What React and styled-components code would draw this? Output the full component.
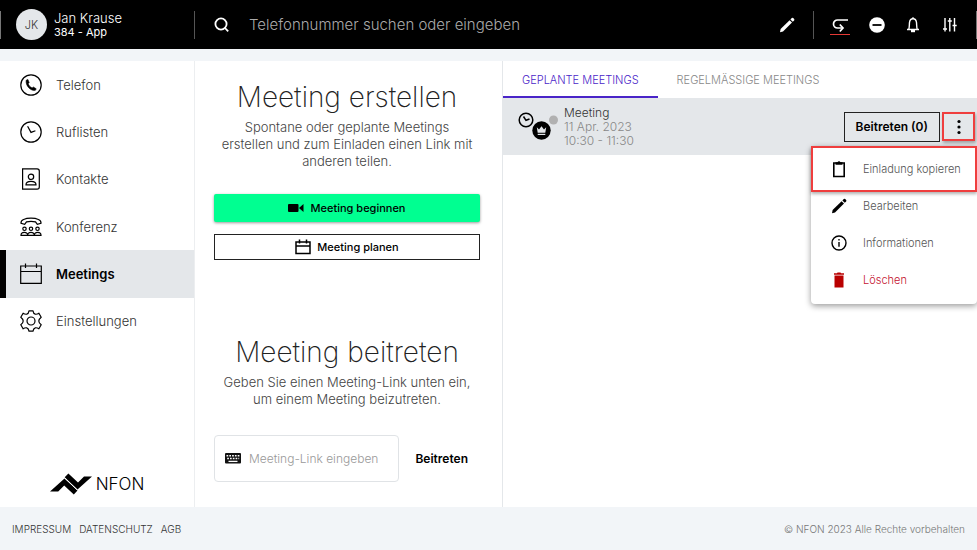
import React, { useState } from 'react'
import styled, { createGlobalStyle } from 'styled-components'

const NAV = [
  { id: 'telefon', label: 'Telefon' },
  { id: 'ruflisten', label: 'Ruflisten' },
  { id: 'kontakte', label: 'Kontakte' },
  { id: 'konferenz', label: 'Konferenz' },
  { id: 'meetings', label: 'Meetings' },
  { id: 'einstellungen', label: 'Einstellungen' },
]

const App = () => {
  const [page, setPage] = useState('meetings')
  const [tab, setTab] = useState('geplant')
  const [link, setLink] = useState('')
  const [menuOpen, setMenuOpen] = useState(true)

  return (
    <Page>
      <GlobalStyle />
      <Header>
        <Profile>
          <Avatar>JK</Avatar>
          <div>
            <UserName>Jan Krause</UserName>
            <UserLine>384 - App</UserLine>
          </div>
        </Profile>
        <SearchBar>
          <SearchIcon />
          <SearchInput
            type="text"
            aria-label="Telefonnummer suchen"
            placeholder="Telefonnummer suchen oder eingeben"
          />
          <HeaderButton aria-label="Bearbeiten"><PencilIcon size={16} /></HeaderButton>
        </SearchBar>
        <HeaderActions>
          <HeaderButton aria-label="Umleitung" $marked><DivertIcon /></HeaderButton>
          <HeaderButton aria-label="Nicht stören"><DndIcon /></HeaderButton>
          <HeaderButton aria-label="Benachrichtigungen"><BellIcon /></HeaderButton>
          <HeaderButton aria-label="Audio"><SlidersIcon /></HeaderButton>
        </HeaderActions>
      </Header>

      <Main>
        <Sidebar>
          <Nav>
            {NAV.map(({ id, label }) => (
              <NavLink
                key={id}
                href={`#${id}`}
                $active={page === id}
                onClick={() => setPage(id)}
              >
                <NavIcon name={id} />
                {label}
              </NavLink>
            ))}
          </Nav>
          <Logo>
            <LogoMark />
            NFON
          </Logo>
        </Sidebar>

        <Actions>
          <Title>Meeting erstellen</Title>
          <Text>Spontane oder geplante Meetings erstellen und zum Einladen einen Link mit anderen teilen.</Text>
          <Buttons>
            <WideButton $primary><CameraIcon />Meeting beginnen</WideButton>
            <WideButton><SmallCalendarIcon />Meeting planen</WideButton>
          </Buttons>
          <Title>Meeting beitreten</Title>
          <Text>Geben Sie einen Meeting-Link unten ein, um einem Meeting beizutreten.</Text>
          <JoinForm onSubmit={e => e.preventDefault()}>
            <LinkField>
              <KeyboardIcon />
              <LinkInput
                type="text"
                aria-label="Meeting-Link"
                placeholder="Meeting-Link eingeben"
                value={link}
                onChange={e => setLink(e.target.value)}
              />
            </LinkField>
            <JoinButton type="submit">Beitreten</JoinButton>
          </JoinForm>
        </Actions>

        <Meetings>
          <Tabs role="tablist">
            <Tab role="tab" aria-selected={tab === 'geplant'} $active={tab === 'geplant'} onClick={() => setTab('geplant')}>
              GEPLANTE MEETINGS
            </Tab>
            <Tab role="tab" aria-selected={tab === 'regel'} $active={tab === 'regel'} onClick={() => setTab('regel')}>
              REGELMÄSSIGE MEETINGS
            </Tab>
          </Tabs>
          <MeetingRow>
            <MeetingIcon />
            <MeetingInfo>
              <MeetingName>Meeting</MeetingName>
              <div>11 Apr. 2023</div>
              <div>10:30 - 11:30</div>
            </MeetingInfo>
            <RowButton>Beitreten (0)</RowButton>
            <MoreButton aria-label="Mehr" onClick={() => setMenuOpen(!menuOpen)}>
              <DotsIcon />
            </MoreButton>
            {menuOpen && (
              <Menu role="menu">
                <MenuItem role="menuitem" $marked><ClipboardIcon />Einladung kopieren</MenuItem>
                <MenuItem role="menuitem"><PencilIcon size={16} />Bearbeiten</MenuItem>
                <MenuItem role="menuitem"><InfoIcon />Informationen</MenuItem>
                <MenuItem role="menuitem" $danger><TrashIcon />Löschen</MenuItem>
              </Menu>
            )}
          </MeetingRow>
        </Meetings>
      </Main>

      <Footer>
        <FooterLinks>
          <a href="#impressum">IMPRESSUM</a>
          <a href="#datenschutz">DATENSCHUTZ</a>
          <a href="#agb">AGB</a>
        </FooterLinks>
        <Copyright>© NFON 2023 Alle Rechte vorbehalten</Copyright>
      </Footer>
    </Page>
  )
}

export default App

/* icons */

const SearchIcon = () => (
  <svg width="16" height="16" viewBox="0 0 16 16" fill="none" stroke="#fff" strokeWidth="1.8">
    <circle cx="7" cy="7" r="5.6" />
    <path d="M10.5 10.5 14.2 14.4" />
  </svg>
)

const PencilIcon = ({ size }) => (
  <svg width={size} height={size} viewBox="0 0 16 16" fill="currentColor">
    <path d="M1 15.2 1.6 12 10.6 3.2 13 5.6 4 14.4Z" />
    <path d="M11.4 2.4 12.8 1.1a1 1 0 0 1 1.4 0l.9.9a1 1 0 0 1 0 1.4L13.8 4.8Z" />
  </svg>
)

const DivertIcon = () => (
  <svg width="18" height="16" viewBox="0 0 18 16" fill="none" stroke="currentColor" strokeWidth="1.7">
    <path d="M17 3H6.5a4 4 0 0 0 0 8H11" />
    <path d="M8.8 7.5 12 11 8.8 14.5" />
  </svg>
)

const DndIcon = () => (
  <svg width="18" height="18" viewBox="0 0 18 18">
    <circle cx="9" cy="9" r="7.8" fill="#fff" />
    <path d="M4.5 9h9" stroke="#000" strokeWidth="1.8" />
  </svg>
)

const BellIcon = () => (
  <svg width="16" height="18" viewBox="0 0 16 18" fill="none" stroke="currentColor" strokeWidth="1.4">
    <path d="M2 13.500h12M3.600 13.500c1-2 .6-4.500.9-7C4.800 4 6 2.700 8 2.700s3.200 1.300 3.500 3.800c.3 2.500-.1 5 .9 7" />
    <path d="M6.700 14.300h2.600v1.200H6.700z" fill="currentColor" />
    <path d="M8 1.200v1.500" />
  </svg>
)

const SlidersIcon = () => (
  <svg width="16" height="16" viewBox="0 0 16 16" stroke="currentColor" strokeWidth="1.4">
    <path d="M3 1v13.500M7.800 1v13.500M12.500 1v13.500M1 12h4M5.800 4h4M10.500 8.500h4.200" />
  </svg>
)

const NavIcon = ({ name }) => (
  <svg width="22" height="22" viewBox="0 0 22 22" fill="none" stroke="#000" strokeWidth="1.2">
    {name === 'telefon' && (
      <>
        <circle cx="11" cy="11" r="10.2" />
        <path d="M6.200 6.200 7.900 5.500 9.200 8.700 8.100 9.800C9 11.700 10 12.900 12.100 14L13.300 13 16.200 14.800 15.400 16.300C10.500 17.200 5.300 11.500 6.200 6.200Z" fill="#000" strokeWidth=".6" />
      </>
    )}
    {name === 'ruflisten' && (
      <>
        <circle cx="11" cy="11" r="10.2" />
        <path d="M7.600 5.200 11 11.400 15.400 9.700" />
      </>
    )}
    {name === 'kontakte' && (
      <>
        <path d="M2.600.8h14.500a2.200 2.200 0 0 1 2.200 2.200v16a2.200 2.200 0 0 1-2.200 2.200H2.600Z" />
        <circle cx="11" cy="8.8" r="2.700" />
        <path d="M6 16.800c0-4.600 10-4.600 10 0Z" />
      </>
    )}
    {name === 'konferenz' && (
      <>
        <path d="M1 7.200C.6 4 5 2.200 11 2.200S21.400 4 21 7.200L17.300 8.400 15.500 5.800Q11 4.800 6.500 5.800L4.700 8.400Z" />
        <circle cx="4.5" cy="12.8" r="1.7" />
        <circle cx="11" cy="12.8" r="1.7" />
        <circle cx="17.5" cy="12.8" r="1.7" />
        <path d="M1 19.300c0-4 6.600-4 6.600 0ZM7.700 19.300c0-4 6.600-4 6.600 0ZM14.400 19.300c0-4 6.600-4 6.600 0Z" />
      </>
    )}
    {name === 'meetings' && (
      <path d="M.7 3h20.600v17.300H.7ZM.7 8.500h20.600M5.500.5V5M16.500.5V5" />
    )}
    {name === 'einstellungen' && (
      <>
        <circle cx="11" cy="11" r="4" />
        <path d="M9 .8h4Q13.400 3.700 15.300 4.200 17 4.500 18.900 3.200L21.200 7.200Q18.800 9 18.800 11T21.200 14.800L18.900 18.800Q17 17.500 15.300 17.800 13.400 18.300 13 21.200H9Q8.600 18.300 6.700 17.800 5 17.500 3.100 18.800L.8 14.800Q3.200 13 3.200 11T.8 7.200L3.100 3.200Q5 4.500 6.700 4.200 8.600 3.700 9 .8Z" strokeLinejoin="round" />
      </>
    )}
  </svg>
)

const SmallCalendarIcon = () => (
  <svg width="16" height="16" viewBox="0 0 16 16" fill="none" stroke="#000" strokeWidth="1.5">
    <path d="M1 3h14v11.500H1ZM1 7h14M4.500.5v4M11.500.5v4" />
  </svg>
)

const LogoMark = () => (
  <svg width="42" height="22" viewBox="0 0 42 22" fill="#000">
    <path d="M0 18.500 14.500 5.500 27.500 17.500 23.800 21.500 14.200 12.500 8.200 18.500Z" />
    <path d="M42 3.500 27.500 16.500 14.700 4.300 18.400.4 28 9.500 34 3.500Z" />
    <path d="M14.700 5 27.300 17" stroke="#fff" strokeWidth="1" />
  </svg>
)

const CameraIcon = () => (
  <svg width="16" height="10" viewBox="0 0 16 10" fill="#000">
    <rect x="0" y="1" width="10.5" height="8" rx="1" />
    <path d="M11 5 15.500 1v8Z" />
  </svg>
)

const KeyboardIcon = () => (
  <svg width="16" height="11" viewBox="0 0 16 11">
    <rect width="16" height="10.5" rx="1" fill="#111" />
    <path d="M1.500 2.800h13M2.200 5.500h12" stroke="#fff" strokeWidth="1.5" strokeDasharray="1.700 1.100" />
    <path d="M3.500 8.400h9" stroke="#fff" strokeWidth="1.3" />
  </svg>
)

const MeetingIcon = () => (
  <svg width="42" height="30" viewBox="0 0 42 30" fill="none">
    <circle cx="8" cy="8" r="6.800" stroke="#000" strokeWidth="1.5" />
    <path d="M5.500 4.500 8 8.300 11.500 7" stroke="#000" strokeWidth="1.5" />
    <circle cx="35.5" cy="8" r="4.5" fill="#b1b1b1" />
    <circle cx="23.5" cy="18.5" r="9.2" fill="#000" />
    <path d="M18.800 15.200 21 17.600 23.500 14.200 26 17.600 28.200 15.200 27.300 20.700H19.700Z" fill="#e4e7ea" />
    <path d="M19.700 22.400h7.600" stroke="#e4e7ea" strokeWidth="1.2" />
  </svg>
)

const DotsIcon = () => (
  <svg width="4" height="16" viewBox="0 0 4 16" fill="#000">
    <circle cx="2" cy="2.5" r="1.6" />
    <circle cx="2" cy="8" r="1.6" />
    <circle cx="2" cy="13.5" r="1.6" />
  </svg>
)

const ClipboardIcon = () => (
  <svg width="16" height="18" viewBox="0 0 16 18">
    <path d="M2.800 3h10.400v13.500H2.800Z" fill="none" stroke="#000" strokeWidth="1.6" />
    <path d="M4.500 2.200h2a1.600 1.600 0 0 1 3 0h2v2.600h-7Z" fill="#000" />
  </svg>
)

const InfoIcon = () => (
  <svg width="16" height="16" viewBox="0 0 16 16" fill="none" stroke="#000" strokeWidth="1.4">
    <circle cx="8" cy="8" r="7" />
    <path d="M8 7v4.800M8 4v1.600" />
  </svg>
)

const TrashIcon = () => (
  <svg width="16" height="16" viewBox="0 0 16 16" fill="#b90000">
    <path d="M3 1.200h3L6.500.5h3L10 1.200h3v1.500H3ZM3.500 3.500h9v12h-9Z" />
  </svg>
)

/* layout */

const GlobalStyle = createGlobalStyle `
  * {
    box-sizing: border-box;
  }

  body {
    margin: 0;
    background-color: #f2f5f8;
    color: #333;
    font-family: Inter, "Liberation Sans", sans-serif;
    font-size: 13px;
    font-weight: 300;
  }

  button, input {
    font: inherit;
    color: inherit;
    border: 0;
    padding: 0;
    background: none;
    outline: none;
  }

  button {
    cursor: pointer;
  }

  a {
    color: inherit;
    text-decoration: none;
  }

  svg {
    flex-shrink: 0;
  }
`

const Page = styled.div `
  display: flex;
  flex-direction: column;
  min-height: 100vh;
`

const Header = styled.header `
  display: grid;
  grid-template-columns: 195fr 619fr 163fr;
  align-items: center;
  height: 49px;
  margin-bottom: 12px;
  background-color: #000;
  color: #fff;
`

const Profile = styled.div `
  display: flex;
  align-items: center;
  gap: 7px;
  height: 28px;
  padding-left: 15px;
  border-left: 1px solid #777;
  border-right: 1px solid #555;
  line-height: 14px;
`

const Avatar = styled.div `
  display: flex;
  align-items: center;
  justify-content: center;
  width: 31px;
  height: 31px;
  border-radius: 50%;
  background-color: #e4e7ea;
  color: #333;
  font-size: 11px;
`

const UserName = styled.div `
  font-size: 13px;
`

const UserLine = styled.div `
  font-size: 11px;
  font-weight: 400;
`

const SearchBar = styled.div `
  display: flex;
  align-items: center;
  height: 28px;
  padding: 0 16px 0 19px;
  border-right: 1px solid #555;
`

const SearchInput = styled.input `
  flex: 1;
  min-width: 0;
  margin-left: 19px;
  font-size: 15px;

  &::placeholder {
    color: #aaa;
    opacity: 1;
  }
`

const HeaderActions = styled.div `
  display: flex;
  align-items: center;
  justify-content: space-between;
  height: 28px;
  padding: 0 16px;
  border-right: 1px solid #777;
`

const HeaderButton = styled.button `
  display: flex;
  align-items: center;
  justify-content: center;
  width: 20px;
  height: 20px;
  border-top: 1px solid transparent;
  border-bottom: 1px solid ${({ $marked }) => ($marked ? '#e53935' : 'transparent')};
`

const Main = styled.main `
  display: grid;
  grid-template-columns: minmax(0, 195fr) minmax(0, 308fr) minmax(0, 474fr);
  flex: 1;
  background-color: #fff;
`

const Sidebar = styled.aside `
  display: flex;
  flex-direction: column;
  justify-content: space-between;
  border-right: 1px solid #eceef0;
`

const Nav = styled.nav `
  display: flex;
  flex-direction: column;
  height: 284px;
`

const NavLink = styled.a `
  display: flex;
  flex: 1;
  align-items: center;
  gap: 14px;
  padding-left: 14px;
  border-left: 6px solid ${({ $active }) => ($active ? '#000' : 'transparent')};
  background-color: ${({ $active }) => ($active ? '#e4e7ea' : 'transparent')};
  color: ${({ $active }) => ($active ? '#000' : '#333')};
  font-weight: ${({ $active }) => ($active ? 600 : 300)};
`

const Logo = styled.div `
  display: flex;
  align-items: center;
  justify-content: center;
  gap: 4px;
  padding-bottom: 12px;
  color: #000;
  font-size: 17px;
  line-height: 22px;
`

const Actions = styled.section `
  padding: 20px 22px 24px 19px;
  border-right: 1px solid #e4e7ea;
  text-align: center;
`

const Title = styled.h1 `
  margin: 0;
  color: #222;
  font-size: 28px;
  font-weight: 200;
  line-height: 32px;
`

const Text = styled.p `
  margin: 6px 0 0;
  padding: 0 4px;
  color: #444;
  font-size: 13px;
  line-height: 17px;
`

const Buttons = styled.div `
  display: flex;
  flex-direction: column;
  gap: 12px;
  margin: 24px 0 76px;
`

const WideButton = styled.button `
  display: flex;
  align-items: center;
  justify-content: center;
  gap: 6px;
  height: ${({ $primary }) => ($primary ? '28px' : '26px')};
  border: ${({ $primary }) => ($primary ? '0' : '1px solid #222')};
  border-radius: ${({ $primary }) => ($primary ? '2px' : '0')};
  background-color: ${({ $primary }) => ($primary ? '#00ff91' : '#fff')};
  box-shadow: ${({ $primary }) => ($primary ? '0 1px 3px rgba(0, 0, 0, 0.4)' : 'none')};
  color: #000;
  font-size: 11px;
  font-weight: 500;
`

const JoinForm = styled.form `
  display: flex;
  align-items: center;
  gap: 16px;
  margin-top: 27px;
`

const LinkField = styled.label `
  display: flex;
  flex: 1;
  align-items: center;
  gap: 8px;
  min-width: 0;
  height: 47px;
  padding: 0 10px;
  border: 1px solid #e0e3e6;
  border-radius: 4px;
`

const LinkInput = styled.input `
  flex: 1;
  min-width: 0;
  font-size: 12px;

  &::placeholder {
    color: #999;
    opacity: 1;
  }
`

const JoinButton = styled.button `
  margin-right: 12px;
  color: #000;
  font-size: 12px;
  font-weight: 600;
`

const Meetings = styled.section `
  min-width: 0;
`

const Tabs = styled.div `
  display: flex;
  height: 37px;
`

const Tab = styled.button `
  padding: 2px 19px 0;
  border-bottom: 2px solid ${({ $active }) => ($active ? '#4a25c8' : 'transparent')};
  color: ${({ $active }) => ($active ? '#4a25c8' : '#888')};
  font-size: 11px;
  white-space: nowrap;
`

const MeetingRow = styled.div `
  position: relative;
  display: flex;
  align-items: center;
  height: 57px;
  padding: 0 2px 0 15px;
  background-color: #e4e7ea;
`

const MeetingInfo = styled.div `
  flex: 1;
  margin-left: 4px;
  color: #888;
  font-size: 12px;
  line-height: 14px;
`

const MeetingName = styled.div `
  color: #333;
`

const RowButton = styled.button `
  height: 30px;
  padding: 0 11px;
  border: 1px solid #222;
  color: #000;
  font-size: 12px;
  font-weight: 600;
`

const MoreButton = styled.button `
  display: flex;
  align-items: center;
  justify-content: center;
  width: 33px;
  height: 29px;
  margin-left: 2px;
  border: 2px solid #ef3e3e;
  box-shadow: 1px 2px 3px rgba(0, 0, 0, 0.3);
`

const Menu = styled.div `
  position: absolute;
  top: 48px;
  right: 0;
  display: flex;
  flex-direction: column;
  width: 166px;
  padding: 4px 0 6px;
  border-radius: 4px;
  background-color: #fff;
  box-shadow: 0 2px 6px rgba(0, 0, 0, 0.4);
`

const MenuItem = styled.button `
  position: relative;
  display: flex;
  align-items: center;
  gap: 16px;
  height: 37px;
  padding-left: 20px;
  color: ${({ $danger }) => ($danger ? '#c4122f' : '#555')};
  font-size: 11px;
  white-space: nowrap;

  svg {
    color: #000;
  }

  &::after {
    content: '';
    display: ${({ $marked }) => ($marked ? 'block' : 'none')};
    position: absolute;
    inset: -4px 0 -5px;
    border: 2px solid #ef3e3e;
    box-shadow: 0 2px 3px rgba(0, 0, 0, 0.3);
  }
`

const Footer = styled.footer `
  display: flex;
  align-items: center;
  justify-content: space-between;
  height: 43px;
  padding: 0 12px;
  font-size: 10px;
`

const FooterLinks = styled.div `
  display: flex;
  gap: 8px;
`

const Copyright = styled.div `
  color: #777;
`
